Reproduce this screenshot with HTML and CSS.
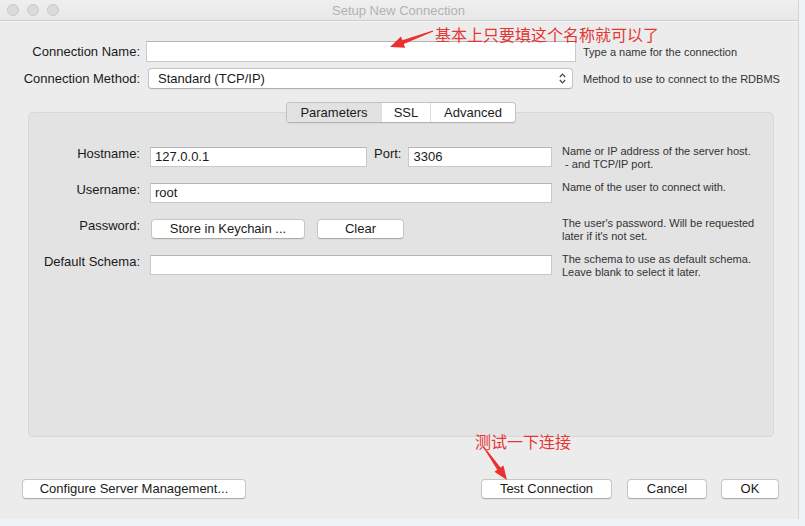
FILE: index.html
```html
<!DOCTYPE html>
<html lang="en">
<head>
<meta charset="utf-8">
<title>Setup New Connection</title>
<link rel="stylesheet" href="styles.css">
</head>
<body>
<div class="screen">
  <div class="window">
    <div class="titlebar">
      <div class="lights">
        <span class="light"></span><span class="light"></span><span class="light"></span>
      </div>
      <div class="title">Setup New Connection</div>
    </div>

    <div class="top-form">
      <label class="label">Connection Name:</label>
      <div class="field"></div>
      <div class="hint">Type a name for the connection</div>

      <label class="label">Connection Method:</label>
      <div class="select">
        <span>Standard (TCP/IP)</span>
        <svg class="chev" width="7" height="11" viewBox="0 0 7 11"><path d="M0.8 4 L3.5 1.2 L6.2 4 M0.8 7 L3.5 9.8 L6.2 7" fill="none" stroke="#444" stroke-width="1.2"/></svg>
      </div>
      <div class="hint">Method to use to connect to the RDBMS</div>
    </div>

    <div class="tabs">
      <div class="segmented">
        <span class="seg seg-params active">Parameters</span>
        <span class="seg seg-ssl">SSL</span>
        <span class="seg seg-adv">Advanced</span>
      </div>
    </div>

    <div class="panel">
      <div class="params">
        <div class="plabel">Hostname:</div>
        <div class="ctrl host-row">
          <div class="field small host">127.0.0.1</div>
          <span class="port-label">Port:</span>
          <div class="field small port">3306</div>
        </div>
        <div class="phint">Name or IP address of the server host.<br>&nbsp;- and TCP/IP port.</div>

        <div class="plabel">Username:</div>
        <div class="ctrl"><div class="field small wide">root</div></div>
        <div class="phint">Name of the user to connect with.</div>

        <div class="plabel">Password:</div>
        <div class="ctrl pw-row">
          <button class="btn keychain">Store in Keychain ...</button>
          <button class="btn clear">Clear</button>
        </div>
        <div class="phint">The user's password. Will be requested<br>later if it's not set.</div>

        <div class="plabel">Default Schema:</div>
        <div class="ctrl"><div class="field small wide"></div></div>
        <div class="phint">The schema to use as default schema.<br>Leave blank to select it later.</div>
      </div>
    </div>

    <div class="footer">
      <button class="btn configure">Configure Server Management...</button>
      <div class="right-buttons">
        <button class="btn test">Test Connection</button>
        <button class="btn cancel">Cancel</button>
        <button class="btn ok">OK</button>
      </div>
    </div>
  </div>

  <svg class="arrows" width="805" height="526" viewBox="0 0 805 526">
    <polygon fill="#ec2f2f" points="433.2,31.5 432.8,30.5 402.4,40.2 401.0,36.5 390,47 405.2,47.7 403.8,44.0"/>
    <polygon fill="#ec2f2f" points="482.6,446.3 483.4,445.7 500.5,467.4 503.4,465.4 507,480 494.4,471.8 497.3,469.8"/>
  </svg>
  <div class="note note-name">基本上只要填这个名称就可以了</div>
  <div class="note note-test">测试一下连接</div>
</div>
</body>
</html>
```
FILE: styles.css
```css
* { box-sizing: border-box; }
html, body { margin: 0; padding: 0; }
body {
  font-family: "Liberation Sans", Arial, "Noto Sans CJK SC", sans-serif;
  font-size: 13px;
  color: #1a1a1a;
  background: #eef2f7;
}
.screen {
  position: relative;
  width: 805px;
  height: 526px;
  overflow: hidden;
  background: #eef3f8;
}
.window {
  width: 799px;
  height: 519px;
  background: #ececec;
  border-right: 1px solid #d4d4d4;
  display: flex;
  flex-direction: column;
}
.titlebar {
  height: 21px;
  flex: none;
  display: flex;
  align-items: center;
  background: linear-gradient(#efefef, #e8e8e8);
  border-bottom: 1px solid #cdcdcd;
  box-shadow: 0 1px 0 #f6f6f6;
}
.lights {
  display: flex;
  gap: 8px;
  padding-left: 7px;
  width: 120px;
}
.light {
  width: 12px;
  height: 12px;
  border-radius: 50%;
  background: #dadada;
  border: 1px solid #cacaca;
}
.title {
  flex: 1;
  text-align: center;
  color: #b2b2b2;
  font-size: 13px;
  margin-right: 121px;
  padding-top: 1px;
}

/* top form */
.top-form {
  display: grid;
  grid-template-columns: 140px 430px 1fr;
  grid-auto-rows: 21px;
  column-gap: 6px;
  row-gap: 6px;
  margin-top: 20px;
  align-items: center;
}
.label {
  text-align: right;
  white-space: nowrap;
  font-size: 13px;
}
.field {
  height: 21px;
  background: #fff;
  border: 1px solid #c9c9c9;
  border-top-color: #b4b4b4;
  padding: 0 4px;
  line-height: 19px;
  font-size: 13px;
}
.select {
  height: 21px;
  margin-left: 2px;
  width: 425px;
  background: #fff;
  border: 1px solid #c4c4c4;
  border-bottom-color: #b0b0b0;
  border-radius: 4px;
  box-shadow: 0 1px 0 rgba(0,0,0,0.04);
  display: flex;
  align-items: center;
  justify-content: space-between;
  padding: 0 6px 0 9px;
  font-size: 13px;
}
.chev { display: block; }
.hint {
  font-size: 11px;
  color: #333;
  white-space: nowrap;
  margin-left: 1px;
}

/* tabs */
.tabs {
  margin-top: 13px;
  display: flex;
  justify-content: center;
  padding-left: 4px;
  position: relative;
  z-index: 1;
  height: 21px;
}
.segmented {
  display: flex;
  height: 21px;
  background: #fff;
  border: 1px solid #c2c2c2;
  border-bottom-color: #b2b2b2;
  border-radius: 4px;
  overflow: hidden;
  box-shadow: 0 1px 0 rgba(0,0,0,0.04);
}
.seg {
  display: flex;
  align-items: center;
  justify-content: center;
  font-size: 13px;
  border-left: 1px solid #dedede;
  height: 100%;
}
.seg:first-child { border-left: none; }
.seg.active { background: #e2e2e2; }
.seg-params { width: 94px; }
.seg-ssl { width: 49px; }
.seg-adv { width: 85px; }

/* panel */
.panel {
  margin: -11px 24px 0 28px;
  height: 325px;
  flex: none;
  background: #e3e3e3;
  border: 1px solid #d8d8d8;
  border-radius: 5px;
  padding-top: 34px;
}
.params {
  display: grid;
  grid-template-columns: 111px 402px 1fr;
  grid-auto-rows: 20px;
  column-gap: 10px;
  row-gap: 16px;
}
.plabel {
  text-align: right;
  white-space: nowrap;
  line-height: 14px;
  align-self: start;
  font-size: 13px;
}
.ctrl { display: flex; align-items: stretch; }
.field.small { height: 20px; line-height: 18px; }
.host { width: 217px; }
.port-label { margin: 0 7px; line-height: 14px; }
.port { flex: 1; }
.wide { flex: 1; }
.pw-row { gap: 12px; padding-left: 1px; }
.phint {
  font-size: 11px;
  color: #333;
  line-height: 12.5px;
  margin-top: -2px;
  white-space: nowrap;
  align-self: start;
}

/* buttons */
.btn {
  font-family: inherit;
  font-size: 13px;
  color: #1a1a1a;
  height: 20px;
  padding: 0;
  background: #fff;
  border: 1px solid #c6c6c6;
  border-bottom-color: #acacac;
  border-radius: 4px;
  box-shadow: 0 1px 0 rgba(0,0,0,0.04);
  line-height: 18px;
}
.keychain { width: 154px; }
.clear { width: 87px; }

.footer {
  margin-top: 42px;
  display: flex;
  justify-content: space-between;
  padding: 0 19px 0 22px;
}
.configure { width: 224px; }
.right-buttons { display: flex; gap: 15px; }
.test { width: 131px; }
.cancel { width: 80px; }
.ok { width: 58px; margin-left: -1px; }

/* annotations */
.arrows {
  position: absolute;
  left: 0;
  top: 0;
  pointer-events: none;
}
.note {
  position: absolute;
  color: #e63535;
  font-family: "Noto Sans CJK SC", sans-serif;
  font-size: 16px;
  line-height: 20px;
  white-space: nowrap;
}
.note-name { left: 435px; top: 24px; }
.note-test { left: 475px; top: 431px; }
```
